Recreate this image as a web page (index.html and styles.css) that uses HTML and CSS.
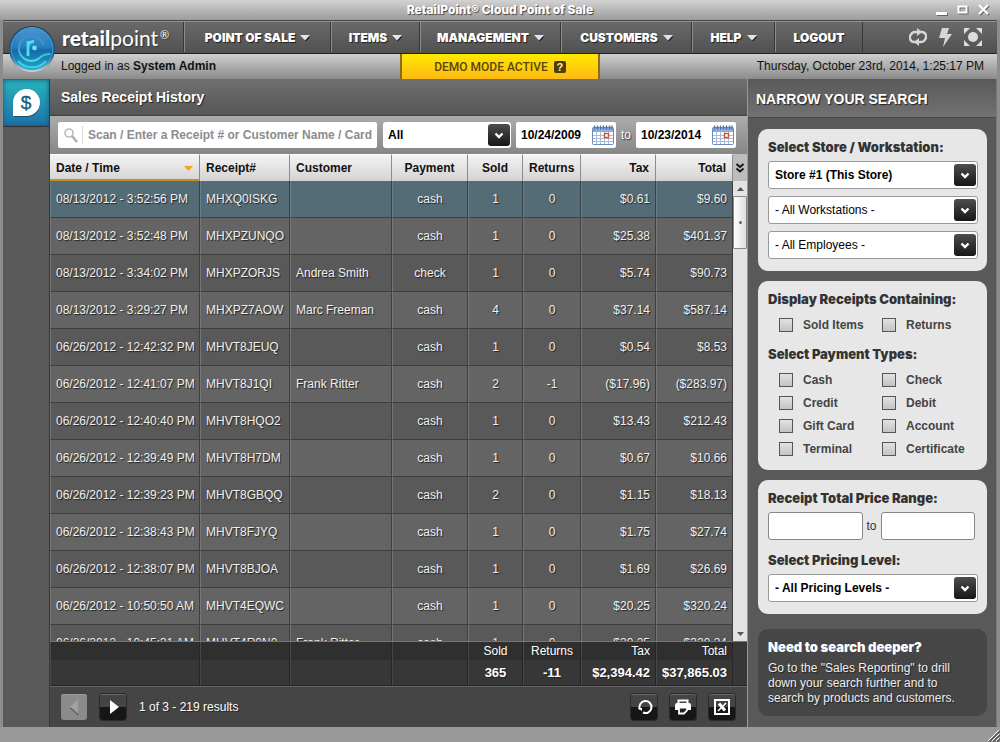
FILE: index.html
```html
<!DOCTYPE html>
<html lang="en">
<head>
<meta charset="utf-8">
<title>RetailPoint® Cloud Point of Sale</title>
<link rel="stylesheet" href="styles.css">
</head>
<body>
<svg class="defs" aria-hidden="true">
  <symbol id="chev" viewBox="0 0 22 22"><path d="M7.5 9.5l3.5 3.5 3.5-3.5" fill="none" stroke="#fff" stroke-width="2.4"/></symbol>
  <symbol id="tri" viewBox="0 0 11 7"><path d="M1.5 1.5h9L6 6.5z" fill="#222"/><path d="M0 0h10L5 5.5z" fill="#e4e4e4"/></symbol>
  <symbol id="cal" viewBox="0 0 22 20">
    <rect x="0.5" y="2.5" width="21" height="17" rx="1" fill="#fff" stroke="#6e8cbc"/>
    <path d="M1 3h20v4H1z" fill="#8fabd9"/>
    <path d="M2.500 0.500v4M5.500 0.500v4M8.500 0.500v4M11.500 0.500v4M14.500 0.500v4M17.500 0.500v4M20 0.500v4" stroke="#4e6da4" stroke-width="1.300"/>
    <path d="M1 10.500h20M1 13.500h20M1 16.500h20M4.500 7v12M8.500 7v12M12.500 7v12M16.500 7v12" stroke="#a9bddd" fill="none"/>
    <rect x="12.500" y="8.500" width="4" height="4" fill="#fff" stroke="#d4502c" stroke-width="1.400"/>
  </symbol>
</svg>
<div class="window">
  <header class="titlebar">
    <h1>RetailPoint® Cloud Point of Sale</h1>
    <div class="winbtns">
      <button aria-label="Minimize"><svg width="12" height="12"><path d="M1 9h11v3H1z" fill="#666"/><path d="M0 8h11v3H0z" fill="#fff"/></svg></button>
      <button aria-label="Maximize"><svg width="12" height="12"><path d="M2.500 3.500h8v6h-8z" fill="none" stroke="#666" stroke-width="2"/><path d="M1.500 2.500h8v6h-8z" fill="none" stroke="#fff" stroke-width="2"/></svg></button>
      <button aria-label="Close"><svg width="12" height="12"><path d="M2 2l9 9M11 2l-9 9" stroke="#666" stroke-width="2"/><path d="M1 1l9 9M10 1l-9 9" stroke="#fff" stroke-width="2.200"/></svg></button>
    </div>
  </header>

  <div class="topnav">
    <a class="brand" href="#">
      <svg class="orb" width="48" height="48" viewBox="0 0 48 48">
        <defs>
          <linearGradient id="orbFill" x1="0" y1="0" x2="0" y2="1"><stop offset="0" stop-color="#4a94ce"/><stop offset="0.450" stop-color="#2a7fbd"/><stop offset="0.550" stop-color="#1769a6"/><stop offset="1" stop-color="#23a9c8"/></linearGradient>
          <linearGradient id="orbRim" x1="0" y1="0" x2="0" y2="1"><stop offset="0" stop-color="#1c3c5a"/><stop offset="0.650" stop-color="#1b5d8a"/><stop offset="1" stop-color="#d0d8da"/></linearGradient>
          <linearGradient id="orbRing" x1="0" y1="0" x2="0" y2="1"><stop offset="0" stop-color="#3f90cc"/><stop offset="0.500" stop-color="#3a9fd6"/><stop offset="1" stop-color="#3fe0ec"/></linearGradient>
        </defs>
        <circle cx="24" cy="24" r="23" fill="url(#orbRim)"/>
        <circle cx="24" cy="23.500" r="21" fill="url(#orbFill)" stroke="#3f9fd4"/>
        <path d="M38 36a18.500 18.500 0 0 1-28 0" fill="none" stroke="#35d3e4" stroke-width="2.200"/>
        <path d="M35.500 20a12.500 12.500 0 1 0-3.500 12.500c3-3 6-3.500 10.500-3.500" fill="none" stroke="url(#orbRing)" stroke-width="2"/>
        <path d="M20 16v15M20 22c0-4 2-5.500 6-5.500" fill="none" stroke="#46e0ef" stroke-width="2.800"/>
        <circle cx="26.500" cy="23" r="2.400" fill="#5ee8f2"/>
      </svg>
      <span class="wordmark"><b>retail</b>point<sup>®</sup></span>
    </a>
    <nav class="menu">
      <a href="#">POINT OF SALE<svg width="11" height="7"><use href="#tri"/></svg></a>
      <a href="#">ITEMS<svg width="11" height="7"><use href="#tri"/></svg></a>
      <a href="#">MANAGEMENT<svg width="11" height="7"><use href="#tri"/></svg></a>
      <a href="#">CUSTOMERS<svg width="11" height="7"><use href="#tri"/></svg></a>
      <a href="#">HELP<svg width="11" height="7"><use href="#tri"/></svg></a>
      <a href="#">LOGOUT</a>
    </nav>
    <div class="tools">
      <button aria-label="Sync"><svg width="18" height="18" viewBox="0 0 18 18"><path d="M7 14H5.500A4.500 4.500 0 0 1 2 6.500C3 4.500 4.500 4 6 4h3M11 4h1.500A4.500 4.500 0 0 1 16 11.500c-1 2-2.500 2.500-4 2.500H9" fill="none" stroke="#d6d6d6" stroke-width="2.400"/><path d="M8 0l5 4-5 4zM10 10l-5 4 5 4z" fill="#d6d6d6"/></svg></button>
      <button aria-label="Quick actions"><svg width="13" height="19" viewBox="0 0 13 19"><path d="M3 0h7L8 6h5L4 19l2-9H0z" fill="#d6d6d6"/></svg></button>
      <button aria-label="Full screen"><svg width="18" height="18" viewBox="0 0 18 18"><circle cx="9" cy="9" r="5" fill="#dcdcdc"/><path d="M0 0h6L0 6zM18 0v6l-6-6zM0 18v-6l6 6zM18 18h-6l6-6z" fill="#dcdcdc"/></svg></button>
    </div>
  </div>

  <div class="status">
    <p>Logged in as <b>System Admin</b></p>
    <button class="demo">DEMO MODE ACTIVE <span class="q">?</span></button>
    <p class="clock">Thursday, October 23rd, 2014, 1:25:17 PM</p>
  </div>

  <div class="body">
    <div class="rail">
      <button aria-label="Sales"><svg width="46" height="46" viewBox="0 0 46 46"><path d="M11 37V23a13 13 0 1 1 13 14z" fill="#12526e"/><path d="M10 36V22a13.500 13.500 0 1 1 13.500 14z" fill="#fff"/><text x="23" y="29" text-anchor="middle" class="dollar">$</text></svg></button>
    </div>

    <main class="content">
      <h2>Sales Receipt History</h2>
      <form class="filters">
        <label class="search">
          <svg width="14" height="15" viewBox="0 0 14 15"><circle cx="5" cy="5" r="4" fill="none" stroke="#bbb" stroke-width="1.600"/><path d="M8 8l5 6" stroke="#b0b0b0" stroke-width="2.600"/></svg>
          <input type="text" aria-label="Search receipts" placeholder="Scan / Enter a Receipt # or Customer Name / Card">
        </label>
        <span class="select flat"><select aria-label="Receipt type"><option>All</option></select><svg><use href="#chev"/></svg></span>
        <span class="date"><input type="text" aria-label="From date" value="10/24/2009"><button type="button" aria-label="Pick from date"><svg width="22" height="20"><use href="#cal"/></svg></button></span>
        <span class="to">to</span>
        <span class="date"><input type="text" aria-label="To date" value="10/23/2014"><button type="button" aria-label="Pick to date"><svg width="22" height="20"><use href="#cal"/></svg></button></span>
      </form>

      <div class="grid">
        <div class="tables">
        <div class="scroller">
          <table>
            <colgroup><col class="c-date"><col class="c-rec"><col><col class="c-pay"><col class="c-sold"><col class="c-ret"><col class="c-tax"><col class="c-total"></colgroup>
            <thead><tr><th class="sorted">Date / Time <svg width="9" height="5"><path d="M0 0h9L4.500 5z" fill="#eda42c"/></svg></th><th>Receipt#</th><th>Customer</th><th class="m">Payment</th><th class="m">Sold</th><th class="m">Returns</th><th class="r">Tax</th><th class="r">Total</th></tr></thead>
            <tbody>
              <tr class="picked"><td>08/13/2012 - 3:52:56 PM</td><td>MHXQ0ISKG</td><td></td><td class="m">cash</td><td class="m">1</td><td class="m">0</td><td class="r">$0.61</td><td class="r">$9.60</td></tr>
              <tr><td>08/13/2012 - 3:52:48 PM</td><td>MHXPZUNQO</td><td></td><td class="m">cash</td><td class="m">1</td><td class="m">0</td><td class="r">$25.38</td><td class="r">$401.37</td></tr>
              <tr><td>08/13/2012 - 3:34:02 PM</td><td>MHXPZORJS</td><td>Andrea Smith</td><td class="m">check</td><td class="m">1</td><td class="m">0</td><td class="r">$5.74</td><td class="r">$90.73</td></tr>
              <tr><td>08/13/2012 - 3:29:27 PM</td><td>MHXPZ7AOW</td><td>Marc Freeman</td><td class="m">cash</td><td class="m">4</td><td class="m">0</td><td class="r">$37.14</td><td class="r">$587.14</td></tr>
              <tr><td>06/26/2012 - 12:42:32 PM</td><td>MHVT8JEUQ</td><td></td><td class="m">cash</td><td class="m">1</td><td class="m">0</td><td class="r">$0.54</td><td class="r">$8.53</td></tr>
              <tr><td>06/26/2012 - 12:41:07 PM</td><td>MHVT8J1QI</td><td>Frank Ritter</td><td class="m">cash</td><td class="m">2</td><td class="m">-1</td><td class="r">($17.96)</td><td class="r">($283.97)</td></tr>
              <tr><td>06/26/2012 - 12:40:40 PM</td><td>MHVT8HQO2</td><td></td><td class="m">cash</td><td class="m">1</td><td class="m">0</td><td class="r">$13.43</td><td class="r">$212.43</td></tr>
              <tr><td>06/26/2012 - 12:39:49 PM</td><td>MHVT8H7DM</td><td></td><td class="m">cash</td><td class="m">1</td><td class="m">0</td><td class="r">$0.67</td><td class="r">$10.66</td></tr>
              <tr><td>06/26/2012 - 12:39:23 PM</td><td>MHVT8GBQQ</td><td></td><td class="m">cash</td><td class="m">2</td><td class="m">0</td><td class="r">$1.15</td><td class="r">$18.13</td></tr>
              <tr><td>06/26/2012 - 12:38:43 PM</td><td>MHVT8FJYQ</td><td></td><td class="m">cash</td><td class="m">1</td><td class="m">0</td><td class="r">$1.75</td><td class="r">$27.74</td></tr>
              <tr><td>06/26/2012 - 12:38:07 PM</td><td>MHVT8BJOA</td><td></td><td class="m">cash</td><td class="m">1</td><td class="m">0</td><td class="r">$1.69</td><td class="r">$26.69</td></tr>
              <tr><td>06/26/2012 - 10:50:50 AM</td><td>MHVT4EQWC</td><td></td><td class="m">cash</td><td class="m">1</td><td class="m">0</td><td class="r">$20.25</td><td class="r">$320.24</td></tr>
              <tr><td>06/26/2012 - 10:45:31 AM</td><td>MHVT4R0N0</td><td>Frank Ritter</td><td class="m">cash</td><td class="m">1</td><td class="m">0</td><td class="r">$20.25</td><td class="r">$320.24</td></tr>
            </tbody>
          </table>
        </div>
        <table class="totals">
          <colgroup><col class="c-date"><col class="c-rec"><col><col class="c-pay"><col class="c-sold"><col class="c-ret"><col class="c-tax"><col class="c-total"></colgroup>
          <tbody>
            <tr class="names"><td></td><td></td><td></td><td></td><td class="m">Sold</td><td class="m">Returns</td><td class="r">Tax</td><td class="r">Total</td></tr>
            <tr class="sums"><td></td><td></td><td></td><td></td><td class="m">365</td><td class="m">-11</td><td class="r">$2,394.42</td><td class="r">$37,865.03</td></tr>
          </tbody>
        </table>
        </div>
        <div class="gutter">
          <button class="cols" aria-label="Choose columns"><svg width="10" height="10" viewBox="0 0 10 10"><path d="M1.500 1L5 4l3.500-3M1.500 5.500L5 8.500l3.500-3" fill="none" stroke="#111" stroke-width="1.800"/></svg></button>
          <div class="bar">
            <button aria-label="Scroll up"><svg width="7" height="4"><path d="M0 4h7L3.500 0z" fill="#555"/></svg></button>
            <div class="thumb"><i></i></div>
            <button class="down" aria-label="Scroll down"><svg width="7" height="4"><path d="M0 0h7L3.500 4z" fill="#555"/></svg></button>
          </div>
          <div class="corner"></div>
        </div>
      </div>

      <div class="pager">
        <button class="off" disabled aria-label="Previous page"><svg width="26" height="26"><path d="M17 5v15l-8-7z" fill="#a0a0a0"/><path d="M9.500 14l8 7" stroke="#5e5e5e" stroke-width="1.300"/></svg></button>
        <button aria-label="Next page"><svg width="26" height="26"><path d="M10 6v14l9-7z" fill="#fff"/></svg></button>
        <p>1 of 3 - 219 results</p>
        <button aria-label="Reload"><svg width="26" height="26" viewBox="0 0 26 26"><path d="M9 15.500a6 6 0 1 1 3 3" fill="none" stroke="#fff" stroke-width="2"/><path d="M6.500 14h4.500v3z" fill="#fff"/></svg></button>
        <button aria-label="Print"><svg width="26" height="26" viewBox="0 0 26 26"><path d="M8.500 10V6.500h9V10" fill="none" stroke="#fff" stroke-width="2"/><path d="M7 9h12a2 2 0 0 1 2 2v5h-4v-3H9v3H5v-5a2 2 0 0 1 2-2z" fill="#fff"/><path d="M9 13.500h8v3l-3 3H9z" fill="#222" stroke="#fff" stroke-width="1.800"/></svg></button>
        <button aria-label="Export to Excel"><svg width="26" height="26" viewBox="0 0 26 26"><path d="M6 6h14v14H6z" fill="none" stroke="#fff" stroke-width="2"/><path d="M10 9.500l6 7" stroke="#fff" stroke-width="3"/><path d="M17 9l-8 8" stroke="#fff" stroke-width="1.600"/></svg></button>
      </div>
    </main>

    <aside class="side">
      <h2>NARROW YOUR SEARCH</h2>
      <form class="panels">
        <section class="panel stack">
          <h3>Select Store / Workstation:</h3>
          <span class="select"><select class="strong" aria-label="Store"><option>Store #1 (This Store)</option></select><svg><use href="#chev"/></svg></span>
          <span class="select"><select aria-label="Workstation"><option>- All Workstations -</option></select><svg><use href="#chev"/></svg></span>
          <span class="select"><select aria-label="Employee"><option>- All Employees -</option></select><svg><use href="#chev"/></svg></span>
        </section>
        <section class="panel">
          <h3>Display Receipts Containing:</h3>
          <div class="checks">
            <label><input type="checkbox">Sold Items</label><label><input type="checkbox">Returns</label>
          </div>
          <h3>Select Payment Types:</h3>
          <div class="checks">
            <label><input type="checkbox">Cash</label><label><input type="checkbox">Check</label>
            <label><input type="checkbox">Credit</label><label><input type="checkbox">Debit</label>
            <label><input type="checkbox">Gift Card</label><label><input type="checkbox">Account</label>
            <label><input type="checkbox">Terminal</label><label><input type="checkbox">Certificate</label>
          </div>
        </section>
        <section class="panel stack">
          <h3>Receipt Total Price Range:</h3>
          <div class="range"><input type="text" aria-label="Lowest total"><span>to</span><input type="text" aria-label="Highest total"></div>
          <h3 class="next">Select Pricing Level:</h3>
          <span class="select"><select class="strong" aria-label="Pricing level"><option>- All Pricing Levels -</option></select><svg><use href="#chev"/></svg></span>
        </section>
        <section class="panel tip">
          <h3>Need to search deeper?</h3>
          <p>Go to the "Sales Reporting" to drill down your search further and to search by products and customers.</p>
        </section>
      </form>
    </aside>
  </div>

  <footer class="strip"><svg width="12" height="12"><path d="M1 12L12 1M5 12l7-7M9 12l3-3" stroke="#555" stroke-width="1.500"/><path d="M0 11L11 0M4 11l7-7M8 11l3-3" stroke="#fff"/></svg></footer>
</div>
</body>
</html>
```
FILE: styles.css
```css
* { box-sizing: border-box; }
body {
  margin: 0;
  font: 12px/16px "Liberation Sans", Arial, sans-serif;
  color: #fff;
}
h1, h2, h3, p { margin: 0; }
button, input, select { font: inherit; color: inherit; margin: 0; }
button { border: 0; padding: 0; background: none; cursor: pointer; }
a { color: inherit; text-decoration: none; }
svg { display: block; flex: none; }
.defs { display: none; }

.window {
  height: 100vh;
  min-height: 640px;
  display: flex;
  flex-direction: column;
  background: #8d8d8d;
}

.titlebar {
  height: 20px;
  flex: none;
  display: grid;
  grid-template-columns: 1fr auto 1fr;
  align-items: center;
  background: linear-gradient(#d2d2d2, #9c9c9c);
}
.titlebar h1 {
  grid-column: 2;
  font: 800 12px/20px Inter, sans-serif;
  text-shadow: 1px 1px 1px #444;
}
.winbtns { display: flex; justify-content: flex-end; gap: 9px; padding-right: 10px; }

.topnav {
  position: relative;
  height: 34px;
  flex: none;
  margin: 0 3px;
  display: flex;
  border-top: 1px solid #4a4a4a;
  border-bottom: 1px solid #222;
  box-shadow: inset 0 1px #8f8f8f;
  background: linear-gradient(#6a6a6a, #515151);
}
.brand { width: 181px; flex: none; padding-left: 59px; }
.orb { position: absolute; left: 5px; top: 4px; z-index: 2; }
.wordmark {
  font: 21px/34px Lato, sans-serif;
  white-space: nowrap;
  text-shadow: 1px 1px 1px #333;
}
.wordmark b { font-weight: 900; }
.wordmark sup { font-size: 11px; line-height: 0; vertical-align: 7px; margin-left: 2px; }
.menu {
  display: grid;
  grid-template-columns: 147px 89px 141px 131px 83px 87px;
  flex: none;
  margin-top: 1px;
  height: 30px;
}
.menu a {
  display: flex;
  align-items: center;
  justify-content: center;
  gap: 5px;
  padding-top: 2px;
  border-left: 1px solid #8b8b8b;
  box-shadow: -1px 0 #383838;
  font: 900 12px/16px Inter, sans-serif;
  text-shadow: 1px 1px 1px #222;
}
.menu a:last-child { box-shadow: -1px 0 #383838, 1px 0 #383838; }
.tools { flex: 1; display: flex; justify-content: flex-end; align-items: center; gap: 12px; padding-right: 15px; }

.status {
  height: 25px;
  flex: none;
  margin: 0 3px;
  padding-bottom: 1px;
  display: grid;
  grid-template-columns: 1fr 200px 1fr;
  background: linear-gradient(#cfcfcf, #8b8b8b);
  color: #111;
  line-height: 25px;
}
.status p { padding-left: 58px; white-space: nowrap; }
.status .clock { padding: 0 13px 0 0; text-align: right; }
.demo {
  border: solid #8a6c12;
  border-width: 0 2px;
  background: linear-gradient(#ffe900, #fdb913);
  color: #5a4606;
  display: flex;
  justify-content: center;
  align-items: center;
  gap: 6px;
  font: 500 12px/24px Roboto, sans-serif;
}
.q { width: 12px; height: 12px; border-radius: 2px; background: #4e3c05; color: #fff0a0; font: bold 11px/12px "Liberation Sans", sans-serif; }

.body { flex: 1; min-height: 0; margin: 0 3px; display: flex; background: #595959; }
.rail { width: 47px; flex: none; border-right: 1px solid #3a3a3a; padding-top: 1px; background: #595959; }
.rail button { width: 46px; height: 46px; background: linear-gradient(#28b4bb, #1d70a8); box-shadow: inset 0 0 5px #11597f, 0 1px #333; }
.dollar { font: 19px "Liberation Sans", sans-serif; fill: #145f84; stroke: #145f84; stroke-width: 0.4; }

.content { flex: 1; min-width: 0; display: flex; flex-direction: column; }
.content h2 {
  height: 37px;
  flex: none;
  padding-left: 11px;
  font: bold 14px/36px "Liberation Sans", Arial, sans-serif;
  border-bottom: 1px solid #404040;
  background: linear-gradient(#707070, #565656);
  text-shadow: 1px 1px 1px #222;
}
.filters {
  flex: none;
  display: flex;
  align-items: center;
  gap: 5px;
  padding: 6px 11px 6px 8px;
  background: linear-gradient(#acacac, #868686);
  font-weight: bold;
  color: #000;
}
.filters > span, .search { height: 26px; }
.search { flex: 1; min-width: 0; display: flex; align-items: center; gap: 4px; padding-left: 6px; background: #fff; border-radius: 2px; }
.search input { flex: 1; min-width: 0; height: 18px; border: 0; border-left: 1px solid #ddd; padding: 0 0 0 5px; background: none; outline: 0; }
.search input::placeholder { color: #8c8c8c; opacity: 1; }
.date { width: 100px; flex: none; display: flex; align-items: center; background: #fff; border-radius: 2px; }
.date input { width: 76px; border: 0; padding: 0 0 0 5px; background: none; outline: 0; }
.to { line-height: 26px; font-weight: normal; color: #fff; text-shadow: 1px 1px 1px #333; }

.select { position: relative; display: block; height: 28px; color: #000; }
.select select {
  appearance: none;
  width: 100%;
  height: 100%;
  padding: 0 28px 0 6px;
  border: 1px solid #999;
  border-radius: 3px;
  background: #fff;
}
.select .strong { font-weight: bold; }
.select svg {
  position: absolute;
  right: 2px;
  top: 3px;
  width: 22px;
  height: 22px;
  border-radius: 3px;
  background: linear-gradient(#4e4e4e, #161616);
  pointer-events: none;
}
.select.flat { width: 128px; flex: none; margin-left: 1px; }
.flat select { border: 0; padding-left: 5px; }
.flat svg { right: 1px; top: 2px; }

.grid { flex: 1; min-height: 0; display: flex; }
.tables { flex: 1; min-width: 0; display: flex; flex-direction: column; }
.scroller { flex: 1; min-height: 0; overflow: hidden; }
table { width: 100%; border-collapse: separate; border-spacing: 0; table-layout: fixed; }
.c-date { width: 150px; }
.c-rec { width: 90px; }
.c-pay { width: 76px; }
.c-sold { width: 55px; }
.c-ret { width: 58px; }
.c-tax { width: 75px; }
.c-total { width: 77px; }
th, td { padding: 0 6px; text-align: left; white-space: nowrap; overflow: hidden; }
.m { text-align: center; }
.r { text-align: right; }
thead th {
  position: sticky;
  top: 0;
  height: 27px;
  color: #111;
  background: linear-gradient(#f4f4f4, #d3d3d3);
  border-right: 1px solid #8d8d8d;
  border-top: 1px solid #fff;
}
thead .sorted { box-shadow: inset 0 -2px #c49022; }
.sorted svg { float: right; margin-top: 6px; }
tbody td {
  height: 37px;
  border-right: 1px solid #3f3f3f;
  border-left: 1px solid #767676;
  border-bottom: 1px solid #3f3f3f;
  padding: 0 5px;
  background: #595959;
  text-shadow: 1px 1px 1px #222;
  color: #f0f0f0;
}
tbody tr:nth-child(even) td { background: #646464; }
tbody .picked td { background: #546c76; border-left-color: #668089; }
.totals { flex: none; border-top: 1px solid #777; }
.totals td { border-right-color: #262626; border-left-color: #474747; border-bottom: 0; color: #fff; }
.totals .names td { height: 18px; background: #2f2f2f; }
.totals .sums td { height: 26px; background: #373737; font-weight: bold; font-size: 13px; border-bottom: 1px solid #262626; }
.totals .sums .r { padding-left: 0; }

.gutter { width: 14px; flex: none; display: flex; flex-direction: column; }
.gutter .cols { height: 27px; display: grid; place-items: center; background: #bcbcbc; }
.bar { flex: 1; display: flex; flex-direction: column; background: #e3e3e3; }
.bar button { height: 15px; display: grid; place-items: center; }
.bar .down { margin-top: auto; }
.thumb { height: 53px; border: 1px solid #888; border-radius: 1px; background: linear-gradient(90deg, #fff, #ddd); display: grid; place-items: center; }
.thumb i { width: 3px; height: 3px; border-radius: 2px; background: #666; }
.corner { height: 45px; background: #373737; border-top: 1px solid #777; border-bottom: 1px solid #262626; }

.pager {
  height: 41px;
  flex: none;
  display: flex;
  align-items: center;
  gap: 13px;
  padding: 0 12px 0 11px;
  background: #454545;
  border-top: 1px solid #666;
}
.pager p { flex: 1; text-shadow: 1px 1px 1px #222; }
.pager button { width: 26px; height: 26px; border-radius: 3px; background: linear-gradient(#444 50%, #161616 50%); box-shadow: 0 0 0 1px #2a2a2a, inset 0 1px #666; }
.pager .off { background: #8b8b8b; box-shadow: inset 0 1px #9c9c9c; }

.side { width: 250px; flex: none; border-left: 1px solid #999; border-right: 1px solid #777; background: #595959; }
.side h2 {
  height: 39px;
  padding-left: 8px;
  font: bold 14px/41px "Liberation Sans", Arial, sans-serif;
  background: linear-gradient(#595959, #727272);
  border-bottom: 1px solid #484848;
  text-shadow: 1px 1px 1px #222;
}
.panels { display: flex; flex-direction: column; gap: 10px; padding: 11px 9px 0 10px; }
.panel { border-radius: 10px; padding: 10px 10px 12px; background: #e7e7e7; color: #333; }
.stack { display: flex; flex-direction: column; gap: 7px; padding-right: 9px; }
.panel h3 { font: 900 13px/17px Inter, sans-serif; }
.stack h3 { margin-bottom: -2px; }
.stack .next { margin-top: 5px; }
.checks {
  display: grid;
  grid-template-columns: 103px 1fr;
  row-gap: 7px;
  padding: 9px 0 13px 11px;
  font-weight: bold;
  color: #444;
}
.checks:last-child { padding-bottom: 1px; }
.checks label { display: flex; align-items: center; gap: 10px; white-space: nowrap; }
.checks input { appearance: none; width: 14px; height: 14px; border: 1px solid #555; background: linear-gradient(#e2e2e2, #c3c3c3); }
.range { display: flex; align-items: center; gap: 4px; padding-right: 3px; }
.range input { flex: 1; min-width: 0; height: 28px; border: 1px solid #888; border-radius: 3px; background: #fff; }
.panel.tip { margin-top: 5px; background: #464646; color: #eee; padding: 10px 20px 10px 10px; }
.tip h3 { color: #fff; margin-bottom: 5px; }
.tip p { line-height: 15px; text-shadow: 1px 1px 1px #222; }

.strip { height: 15px; flex: none; display: flex; justify-content: flex-end; align-items: flex-end; background: #999; }
```
